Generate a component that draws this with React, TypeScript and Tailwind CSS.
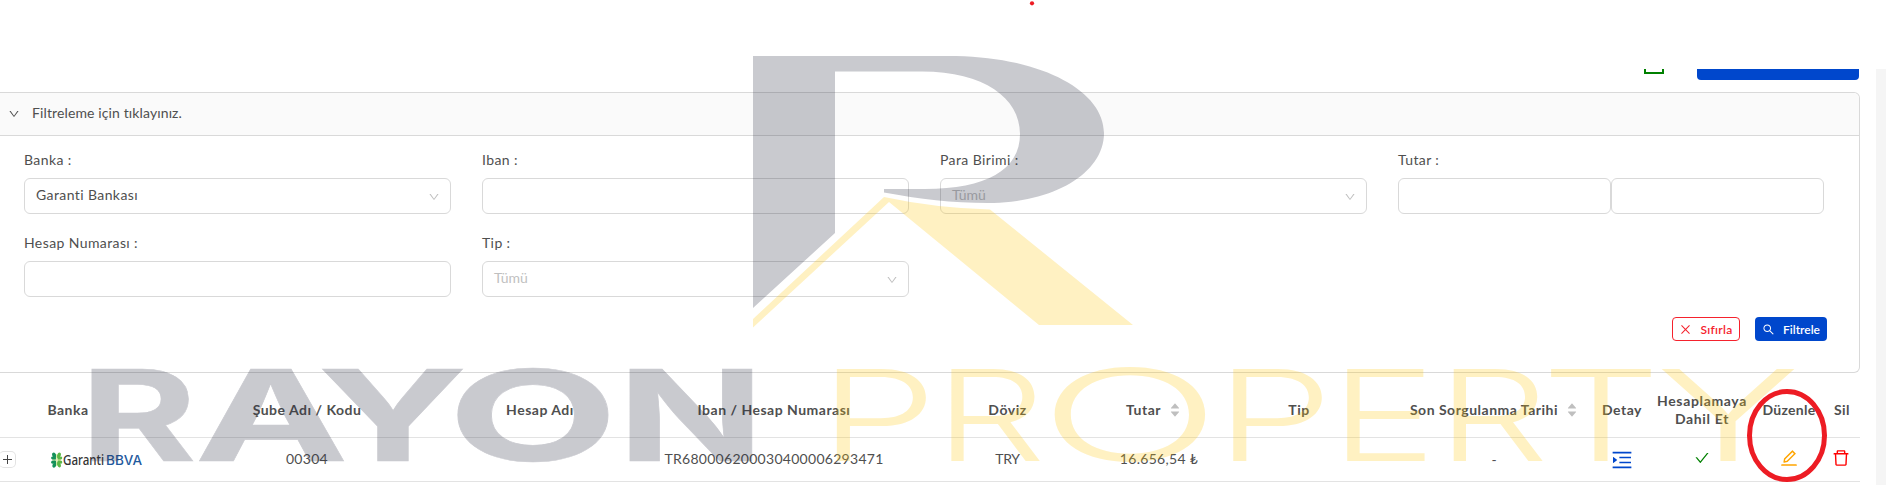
import React from "react";
import {
  AiOutlineDown,
  AiOutlineClose,
  AiOutlineSearch,
  AiOutlineMenuUnfold,
  AiOutlineCheck,
  AiOutlineEdit,
  AiOutlineDelete,
  AiFillCaretUp,
  AiFillCaretDown,
} from "react-icons/ai";

function Label({ children }: { children: React.ReactNode }) {
  return <div className="mb-[7px] h-[22px] text-[14px] leading-[22px] tracking-[0.4px] whitespace-nowrap">{children}</div>;
}

function Box({ children }: { children?: React.ReactNode }) {
  return (
    <div className="flex h-9 w-full items-center justify-between rounded-md border border-[#d9d9d9] pr-[10px] pl-[11px] text-[14px]">
      {children}
    </div>
  );
}

function Select({ value, muted }: { value: string; muted?: boolean }) {
  return (
    <Box>
      <span className={muted ? "pb-[3px] text-[#bfbfbf]" : "pb-[3px] tracking-[0.4px]"}>{value}</span>
      <AiOutlineDown className="mt-[2px] size-3 text-[#bfbfbf]" />
    </Box>
  );
}

function Sorter() {
  return (
    <span className="flex flex-col text-[#bfbfbf]">
      <AiFillCaretUp className="-mb-[2px] size-[12px]" />
      <AiFillCaretDown className="-mt-[2px] size-[12px]" />
    </span>
  );
}

function GarantiLogo() {
  return (
    <div className="flex items-center">
      <svg className="h-4 w-3" viewBox="0 0 12 16">
        <g fill="#15915a">
          <ellipse cx="3.3" cy="3.4" rx="1.9" ry="3" transform="rotate(-25 3.3 3.4)" />
          <ellipse cx="2.6" cy="6.4" rx="2.6" ry="1.6" transform="rotate(20 2.6 6.4)" />
          <ellipse cx="2.6" cy="9.8" rx="2.6" ry="1.6" transform="rotate(-20 2.6 9.8)" />
          <ellipse cx="3.6" cy="12.8" rx="1.9" ry="3" transform="rotate(25 3.6 12.8)" />
        </g>
        <g fill="#5cb847">
          <ellipse cx="7.8" cy="3.4" rx="1.8" ry="3" transform="rotate(25 7.8 3.4)" />
          <ellipse cx="8.8" cy="6.4" rx="2.6" ry="1.6" transform="rotate(-20 8.8 6.4)" />
          <ellipse cx="8.8" cy="9.8" rx="2.6" ry="1.6" transform="rotate(20 8.8 9.8)" />
          <ellipse cx="7.8" cy="12.6" rx="1.8" ry="3" transform="rotate(-25 7.8 12.6)" />
        </g>
        <path d="M5.6 2v12M1.5 8h9" stroke="#e3f0a8" strokeWidth="0.9" />
      </svg>
      <svg className="h-5 w-[80px]" viewBox="0 0 80 20">
        <text x="0" y="14.5" textLength="41" lengthAdjust="spacingAndGlyphs" fontSize="13.5" fontWeight="500" fill="#333" fontFamily="'Noto Sans', sans-serif">Garanti</text>
        <text x="43" y="14.5" textLength="36" lengthAdjust="spacingAndGlyphs" fontSize="12.5" fontWeight="500" fill="#1f5a9e" fontFamily="Inter, sans-serif">BBVA</text>
      </svg>
    </div>
  );
}

type Glyph = [char: string, left: number, right: number];
const grey: Glyph[] = [["R", 91, 194], ["A", 199, 345], ["Y", 322, 464], ["O", 456, 609], ["N", 629, 753.5]];
const gold: Glyph[] = [
  ["P", 836.5, 927], ["R", 951, 1041], ["O", 1054.5, 1206.5], ["P", 1233, 1323],
  ["E", 1347, 1426], ["R", 1453.5, 1544], ["T", 1550, 1652], ["Y", 1661, 1796],
];

// Stretches each letter so that its ink spans exactly from left to right.
function Letters({ glyphs, weight, stroke, size, color }: { glyphs: Glyph[]; weight: number; stroke: number; size: number; color: string }) {
  const ctx = document.createElement("canvas").getContext("2d")!;
  ctx.font = `${weight} ${size}px Inter`;
  return (
    <>
      {glyphs.map(([c, left, right], i) => {
        const m = ctx.measureText(c);
        const inkLeft = -m.actualBoundingBoxLeft - stroke / 2;
        const inkRight = m.actualBoundingBoxRight + stroke / 2;
        const s = (right - left) / (inkRight - inkLeft);
        return (
          <text
            key={i}
            transform={`translate(${left - inkLeft * s} ${461 - stroke / 2}) scale(${s} 1)`}
            fontFamily="Inter, sans-serif"
            fontWeight={weight}
            fontSize={size}
            stroke={color}
            strokeWidth={stroke}
          >
            {c}
          </text>
        );
      })}
    </>
  );
}

function Watermark() {
  return (
    <svg className="pointer-events-none absolute inset-0 h-[485px] w-[1886px]" viewBox="0 0 1886 485">
      <g fill="#27293f" opacity="0.25">
        <path d="M753 56H956C1045 58 1104 92 1104 133C1104 174 1052 203 988 203C952 203 920 199 884 192.500V189H925C986 189 1020 170 1020 134C1020 98 984 71.500 922 71.500H835V233L753 308Z" />
        <Letters glyphs={grey} weight={700} stroke={0.5} size={126.5} color="#27293f" />
      </g>
      <g fill="#ffc70b" opacity="0.25">
        <path d="M753 319L884 197Q935 208 990 209.500L1133 325H1039L889 202L753 327.500Z" />
        <Letters glyphs={gold} weight={300} stroke={0} size={127} color="#ffc70b" />
      </g>
    </svg>
  );
}

const cols =
  "grid grid-cols-[182px_250px_216px_252px_215px_88px_192px_198px_58px_102px_72px_34px] items-center justify-items-center";

export default function App() {
  return (
    <div className="relative h-[485px] w-[1886px] overflow-hidden bg-white font-[Lato,sans-serif] text-[14px] text-[#4f4f4f] [font-variant-ligatures:none]">
      <div className="h-[69px]" />
      <div className="flex h-[416px]">
        <div className="w-[1860px]">
          <div className="flex h-[23px] items-start justify-end pr-px">
            <div className="mr-[33px] h-[5px] w-5 border-2 border-t-0 border-[#008000]" />
            <div className="h-[11px] w-[162px] rounded-b-[4px] bg-[#0047cc]" />
          </div>
          <div className="h-[281px] rounded-r-md border border-l-0 border-[#d9d9d9]">
            <div className="flex h-[43px] items-center gap-3 rounded-tr-md border-b border-[#d9d9d9] bg-[#fafafa] pl-2">
              <AiOutlineDown className="size-3" />
              <span className="pb-[3px] tracking-[0.12px]">Filtreleme için tıklayınız.</span>
            </div>
            <div className="grid grid-cols-[427px_427px_427px_426px] gap-x-[31px] gap-y-[18px] pt-[13px] pl-6">
              <div><Label>Banka :</Label><Select value="Garanti Bankası" /></div>
              <div><Label>Iban :</Label><Box /></div>
              <div><Label>Para Birimi :</Label><Select value="Tümü" muted /></div>
              <div><Label>Tutar :</Label><div className="flex"><Box /><Box /></div></div>
              <div><Label>Hesap Numarası :</Label><Box /></div>
              <div><Label>Tip :</Label><Select value="Tümü" muted /></div>
            </div>
            <div className="mt-5 flex justify-end gap-[15px] pr-8 text-[12px]">
              <button className="flex h-6 w-[68px] items-center justify-center gap-2 rounded-[4px] border border-[#f5222d] text-[#f5222d]">
                <AiOutlineClose className="size-[13px]" />
                <span className="pt-px font-semibold tracking-[0.3px]">Sıfırla</span>
              </button>
              <button className="flex h-6 w-[72px] items-center justify-center gap-2 rounded-[4px] bg-[#0047cc] text-white">
                <AiOutlineSearch className="size-[13px]" />
                <span className="pt-px font-semibold">Filtrele</span>
              </button>
            </div>
          </div>
          <div className={`${cols} h-[65px] border-b border-[#e3e3e3] pt-[9px] text-center font-bold tracking-[0.5px] whitespace-nowrap`}>
            <span className="mr-[46px]">Banka</span>
            <span>Şube Adı / Kodu</span>
            <span>Hesap Adı</span>
            <span>Iban / Hesap Numarası</span>
            <span>Döviz</span>
            <span className="mr-[11px] flex items-center gap-2">Tutar<Sorter /></span>
            <span>Tip</span>
            <span className="flex items-center gap-2">Son Sorgulanma Tarihi<Sorter /></span>
            <span>Detay</span>
            <span className="leading-[18px] tracking-[0.65px]">Hesaplamaya<br />Dahil Et</span>
            <span className="tracking-[0.3px]">Düzenle</span>
            <span>Sil</span>
          </div>
          <div className={`${cols} h-11 border-b border-[#e3e3e3] whitespace-nowrap`}>
            <div className="flex w-full items-center">
              <span className="-ml-px flex size-[17px] items-center justify-center rounded-[5px] border border-l-0 border-[#e3e3e3]">
                <svg className="size-[9px]" viewBox="0 0 9 9"><path d="M4.500 0v9M0 4.500h9" stroke="#444" /></svg>
              </span>
              <div className="ml-[35px]"><GarantiLogo /></div>
            </div>
            <span className="pb-[3px] tracking-[0.3px]">00304</span>
            <span />
            <span className="pb-[3px] tracking-[0.28px]">TR680006200030400006293471</span>
            <span className="pb-[3px] tracking-[-0.3px]">TRY</span>
            <span className="pb-[3px] tracking-[0.3px]">16.656,54 ₺</span>
            <span />
            <span>-</span>
            <AiOutlineMenuUnfold className="size-6 text-[#0047cc]" />
            <AiOutlineCheck className="mb-[3px] size-4 text-[#008000]" />
            <AiOutlineEdit className="mb-[3px] size-5 text-[#ffa500]" />
            <AiOutlineDelete className="mr-[2px] mb-[3px] size-5 text-[#ff0000]" />
          </div>
        </div>
        <div className="w-4" />
        <div className="w-[10px] bg-[#f5f5f5]" />
      </div>
      <Watermark />
      <svg className="pointer-events-none absolute inset-0 h-[485px] w-[1886px]" viewBox="0 0 1886 485">
        <circle cx="1032" cy="3.300" r="2.100" fill="#ed1c24" />
        <ellipse cx="1787" cy="435.500" rx="37.500" ry="44" fill="none" stroke="#ed1c24" strokeWidth="5" />
      </svg>
    </div>
  );
}
